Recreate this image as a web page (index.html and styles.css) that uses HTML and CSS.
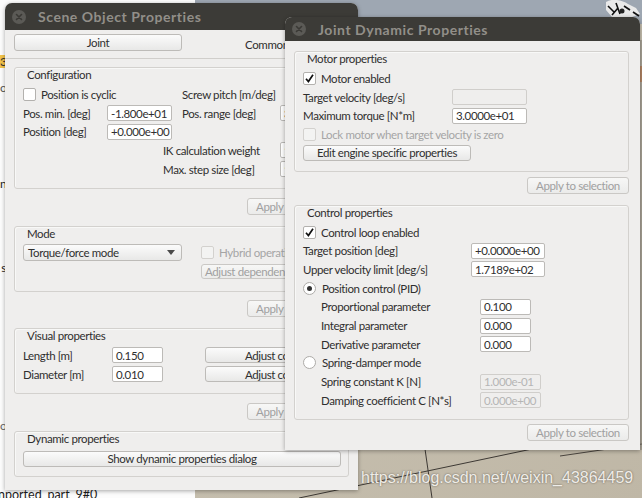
FILE: index.html
```html
<!DOCTYPE html>
<html>
<head>
<meta charset="utf-8">
<link rel="stylesheet" href="styles.css">
</head>
<body>
<svg class="scene" width="642" height="498" viewBox="0 0 642 498">
  <defs>
    <linearGradient id="floor" x1="0" y1="0" x2="1" y2="1">
      <stop offset="0" stop-color="#cec8ba"/>
      <stop offset="0.5" stop-color="#c7c0b0"/>
      <stop offset="1" stop-color="#bfb7a6"/>
    </linearGradient>
  </defs>
  <rect x="0" y="0" width="642" height="498" fill="url(#floor)"/>
  <rect x="195" y="0" width="447" height="24" fill="#9ea7b2"/>
  <rect x="639" y="66" width="3" height="16" fill="#d9834a"/>
  <line x1="299" y1="498" x2="532" y2="449" stroke="#3d3934" stroke-width="1"/>
  <line x1="425" y1="449" x2="432" y2="498" stroke="#3d3934" stroke-width="1"/>
  <line x1="560" y1="456" x2="642" y2="444" stroke="#4a453f" stroke-width="1"/>
  <line x1="641" y1="40" x2="641" y2="450" stroke="#8a857c" stroke-width="1"/>
  <g class="robot">
    <path d="M606 2 C612 -2 622 0 628 4 L636 8 L640 14 L632 17 L612 17 L606 10 Z" fill="#e9e9e9"/>
    <path d="M608 6 L614 12 M616 3 L620 14 M624 6 L630 10 M633 12 L639 16 M612 15 L618 8" stroke="#111" stroke-width="1.6" fill="none"/>
    <circle cx="622" cy="11" r="2.5" fill="#222"/>
  </g>
</svg>

<div class="outliner">
  <div class="ol-item ol-sel">3</div>
  <div class="ol-item ol-o1">o</div>
  <div class="ol-item ol-n">n</div>
  <div class="ol-item ol-s">s</div>
  <div class="ol-item ol-o2">o</div>
  <div class="ol-last">nported_part_9#0</div>
</div>

<div class="win win-left">
  <div class="titlebar">
    <span class="close"><svg width="14" height="14" viewBox="0 0 14 14"><path d="M4.5 4.5 L9.5 9.5 M9.5 4.5 L4.5 9.5" stroke="#3a3935" stroke-width="1.6" stroke-linecap="round"/></svg></span>
    <span class="title">Scene Object Properties</span>
  </div>
  <div class="body">
    <div class="tabs">
      <div class="btn tab">Joint</div>
      <div class="tab-plain">Common</div>
    </div>
    <div class="sep"></div>

    <div class="group g-config">
      <div class="gtitle">Configuration</div>
      <div class="row">
        <span class="cb"></span><span class="w-cyc">Position is cyclic</span><span>Screw pitch [m/deg]</span>
      </div>
      <div class="row">
        <span class="w84">Pos. min. [deg]</span><span class="inp w65">-1.800e+01</span>
        <span class="w98 ml10">Pos. range [deg]</span><span class="inp w65">3.600e+02</span>
      </div>
      <div class="row">
        <span class="w84">Position [deg]</span><span class="inp w65">+0.000e+00</span>
      </div>
      <div class="row">
        <span class="ml140 w117">IK calculation weight</span><span class="inp w65">1.00</span>
      </div>
      <div class="row">
        <span class="ml140 w117">Max. step size [deg]</span><span class="inp w65">1.000e+01</span>
      </div>
    </div>
    <div class="btn dis apply apply-1">Apply to selection</div>

    <div class="group g-mode">
      <div class="gtitle">Mode</div>
      <div class="mode-row">
        <div class="btn combo"><span>Torque/force mode</span><svg width="8" height="5" viewBox="0 0 8 5"><path d="M0 0 L8 0 L4 5 Z" fill="#4a4a4a"/></svg></div>
        <span class="cb dis ml19"></span><span class="muted">Hybrid operation</span>
      </div>
      <div class="btn dis adjust">Adjust dependent joints</div>
    </div>
    <div class="btn dis apply apply-2">Apply to selection</div>

    <div class="group g-visual">
      <div class="gtitle">Visual properties</div>
      <div class="row19">
        <span class="w89">Length [m]</span><span class="inp w51">0.150</span>
        <div class="btn color-btn">Adjust color</div>
      </div>
      <div class="row19">
        <span class="w89">Diameter [m]</span><span class="inp w51">0.010</span>
        <div class="btn color-btn">Adjust color</div>
      </div>
    </div>
    <div class="btn dis apply apply-3">Apply to selection</div>

    <div class="group g-dyn">
      <div class="gtitle">Dynamic properties</div>
      <div class="btn dyn-btn">Show dynamic properties dialog</div>
    </div>
  </div>
</div>

<div class="win win-right">
  <div class="titlebar">
    <span class="close"><svg width="14" height="14" viewBox="0 0 14 14"><path d="M4.5 4.5 L9.5 9.5 M9.5 4.5 L4.5 9.5" stroke="#3a3935" stroke-width="1.6" stroke-linecap="round"/></svg></span>
    <span class="title">Joint Dynamic Properties</span>
  </div>
  <div class="body body-right">
    <div class="group g-motor">
      <div class="gtitle">Motor properties</div>
      <div class="row">
        <span class="cb"><svg width="11" height="11" viewBox="0 0 11 11"><path d="M2 5.8 L4.4 8.6 L9 1.8" stroke="#111" stroke-width="1.7" fill="none"/></svg></span><span>Motor enabled</span>
      </div>
      <div class="row">
        <span class="w149">Target velocity [deg/s]</span><span class="inp dis w75"></span>
      </div>
      <div class="row">
        <span class="w149">Maximum torque [N*m]</span><span class="inp w75">3.0000e+01</span>
      </div>
      <div class="row">
        <span class="cb dis"></span><span class="muted">Lock motor when target velocity is zero</span>
      </div>
      <div class="btn engine-btn">Edit engine specific properties</div>
    </div>
    <div class="btn dis apply apply-r1">Apply to selection</div>

    <div class="group g-control">
      <div class="gtitle">Control properties</div>
      <div class="row">
        <span class="cb"><svg width="11" height="11" viewBox="0 0 11 11"><path d="M2 5.8 L4.4 8.6 L9 1.8" stroke="#111" stroke-width="1.7" fill="none"/></svg></span><span>Control loop enabled</span>
      </div>
      <div class="row">
        <span class="w168">Target position [deg]</span><span class="inp w74">+0.0000e+00</span>
      </div>
      <div class="row">
        <span class="w168">Upper velocity limit [deg/s]</span><span class="inp w74">1.7189e+02</span>
      </div>
      <div class="row">
        <span class="radio on"></span><span>Position control (PID)</span>
      </div>
      <div class="row">
        <span class="ml18 w159">Proportional parameter</span><span class="inp w51">0.100</span>
      </div>
      <div class="row">
        <span class="ml18 w159">Integral parameter</span><span class="inp w51">0.000</span>
      </div>
      <div class="row">
        <span class="ml18 w159">Derivative parameter</span><span class="inp w51">0.000</span>
      </div>
      <div class="row">
        <span class="radio"></span><span>Spring-damper mode</span>
      </div>
      <div class="row">
        <span class="ml18 w159">Spring constant K [N]</span><span class="inp dis w61">1.000e-01</span>
      </div>
      <div class="row">
        <span class="ml18 w159">Damping coefficient C [N*s]</span><span class="inp dis w61">0.000e+00</span>
      </div>
    </div>
    <div class="btn dis apply apply-r2">Apply to selection</div>
  </div>
</div>

<div class="watermark">https://blog.csdn.net/weixin_43864459</div>
</body>
</html>
```

FILE: styles.css
```css
* { box-sizing: border-box; }
html, body { margin: 0; padding: 0; }
body {
  position: relative;
  width: 642px;
  height: 498px;
  overflow: hidden;
  font-family: Lato, "Noto Sans", sans-serif;
  font-size: 11.5px;
  letter-spacing: -0.38px;
  color: #2f2f2f;
  background: #c9c2b3;
}
.scene { position: absolute; left: 0; top: 0; }

/* outliner behind windows */
.outliner {
  position: absolute; left: 0; top: 0;
  width: 195px; height: 498px;
  background: #fcfcfc;
  display: flex; flex-direction: column;
  font-size: 12px; color: #222;
}
.ol-item { width: 6px; height: 13px; line-height: 13px; overflow: hidden; text-align: right; font-size: 12px; }
.ol-sel { margin-top: 55px; background: #f2c34a; color: #333; }
.ol-o1 { margin-top: 13px; color: #555; }
.ol-n { margin-top: 83px; }
.ol-s { margin-top: 71px; }
.ol-o2 { margin-top: 145px; color: #666; }
.ol-last { margin-top: auto; margin-left: -2px; height: 11px; line-height: 15px; overflow: visible; font-size: 12.5px; letter-spacing: 0; color: #1c1c1c; }

/* windows */
.win {
  position: absolute;
  display: flex; flex-direction: column;
  background: #efeeed;
  border-radius: 7px 7px 0 0;
  overflow: hidden;
  box-shadow: 0 1px 4px rgba(0,0,0,0.35);
}
.win-left { left: 5px; top: 3px; width: 353px; height: 487px; }
.win-right { left: 285px; top: 17px; width: 355px; height: 433px; }
.titlebar {
  flex: none;
  display: flex; align-items: center; gap: 12px;
  height: 27px; padding-left: 7px;
  background: #3c3b37;
}
.win-right .titlebar { height: 24px; }
.close {
  width: 14px; height: 14px; border-radius: 50%;
  background: #5b5a56;
  display: flex; align-items: center; justify-content: center;
}
.title { font-weight: 700; font-size: 14px; letter-spacing: 0.55px; color: #928f89; }

.body { display: flex; flex-direction: column; padding: 4px 9px 0 9px; }
.body-right { padding: 10px 11px 0 9px; }

.tabs { display: flex; height: 21px; }
.tab { width: 168px; height: 21px; }
.tab-plain { padding-left: 63px; display: flex; align-items: center; }
.sep { height: 1px; background: #d0cecb; margin: 3px -9px 0; }

.group {
  display: flex; flex-direction: column;
  border: 1px solid #d3d1ce;
  border-radius: 3px;
  padding: 0 8px;
  box-shadow: inset 1px 1px 0 #f8f8f7;
}
.gtitle { height: 17px; line-height: 13px; padding-left: 4px; }
.row { display: flex; align-items: center; height: 18.7px; white-space: nowrap; }
.row19 { display: flex; align-items: center; height: 19px; white-space: nowrap; }

.g-config { margin-top: 8px; padding-bottom: 9.5px; }
.g-mode { margin-top: 11px; padding-bottom: 12px; }
.g-visual { margin-top: 11px; padding-bottom: 9px; }
.g-dyn { margin-top: 11px; padding-bottom: 9px; }
.g-motor { padding-bottom: 10px; }
.g-control { margin-top: 11px; padding-bottom: 9px; }

.btn {
  display: flex; align-items: center; justify-content: center;
  height: 17px;
  border: 1px solid #bdbbb8;
  border-radius: 3px;
  background: linear-gradient(#fbfbfb, #e8e8e7);
  white-space: nowrap;
}
.btn.dis { color: #a0a0a0; border-color: #cac8c5; background: linear-gradient(#f7f7f6, #ebebea); }
.apply { align-self: flex-end; width: 102px; }
.apply-1 { margin-top: 9px; }
.apply-2 { margin-top: 8px; }
.apply-3 { margin-top: 9px; }
.apply-r1 { margin-top: 5px; }
.apply-r2 { margin-top: 4px; }

.inp {
  display: flex; align-items: center;
  height: 16px;
  padding-left: 3px;
  background: #fff;
  border: 1px solid #bcbab7;
  border-radius: 2px;
  flex: none;
}
.inp.dis { background: #efeeed; color: #b5b5b5; border-color: #d0cecb; }

.cb {
  flex: none;
  width: 13px; height: 13px;
  margin-right: 5px;
  border: 1px solid #b3b1ae;
  border-radius: 2px;
  background: #fff;
  display: flex; align-items: center; justify-content: center;
}
.cb.dis { background: #f3f3f2; border-color: #d3d1ce; }
.radio {
  flex: none;
  width: 13px; height: 13px;
  margin-right: 6px;
  border: 1px solid #adaba8;
  border-radius: 50%;
  background: #fff;
  display: flex; align-items: center; justify-content: center;
}
.radio.on::after {
  content: "";
  width: 5px; height: 5px; border-radius: 50%;
  background: #333;
}
.muted { color: #a5a5a5; }

.mode-row { display: flex; align-items: center; height: 17px; white-space: nowrap; }
.combo { width: 159px; justify-content: space-between; padding: 0 6px 0 4px; flex: none; }
.adjust { width: 140px; height: 15px; margin: 3px 0 0 178px; justify-content: flex-start; padding-left: 3px; }
.color-btn { width: 136px; height: 16px; margin-left: 42px; flex: none; }
.dyn-btn { width: 318px; height: 16px; margin-top: 2px; }
.engine-btn { width: 168px; height: 16px; margin-top: 1px; }

.w-cyc { width: 141px; flex: none; }
.w84 { width: 84px; flex: none; }
.w89 { width: 89px; flex: none; }
.w98 { width: 98px; flex: none; }
.w117 { width: 117px; flex: none; }
.w149 { width: 149px; flex: none; }
.w159 { width: 159px; flex: none; }
.w168 { width: 168px; flex: none; }
.w51 { width: 51px; }
.w61 { width: 61px; }
.w65 { width: 65px; }
.w74 { width: 74px; }
.w75 { width: 75px; }
.ml10 { margin-left: 10px; }
.ml18 { margin-left: 18px; }
.ml19 { margin-left: 19px; }
.ml140 { margin-left: 140px; }

.watermark {
  position: absolute; left: 361px; top: 469px;
  font-family: "Liberation Sans", Arial, sans-serif;
  font-size: 16px; letter-spacing: 0;
  color: rgba(250, 248, 244, 0.92);
  text-shadow: 0 0 2px rgba(70, 64, 56, 0.8);
}
```
